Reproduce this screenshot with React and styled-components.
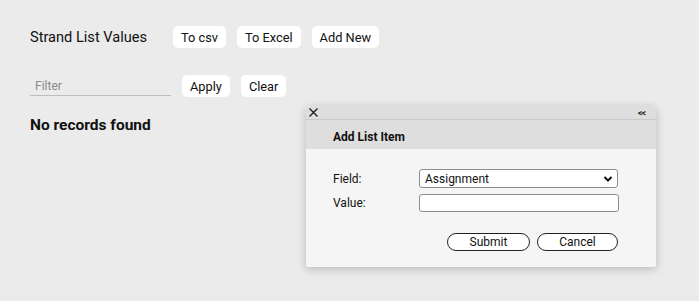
import React from "react";
import styled, { createGlobalStyle } from "styled-components";

const GlobalStyle = createGlobalStyle`
  body {
    margin: 0;
    background: #ebebeb;
    font-family: Roboto, "Liberation Sans", sans-serif;
    color: #111;
  }
`;

const Page = styled.div`
  position: relative;
  width: 699px;
  height: 301px;
  padding: 26px 30px 0 30px;
  box-sizing: border-box;
`;

const Toolbar = styled.div`
  display: flex;
  align-items: center;
  gap: 11px;
  height: 22px;
`;

const Title = styled.div`
  width: 132px;
  font-size: 14.6px;
`;

const Button = styled.button`
  height: 22px;
  padding: 0 8px;
  border: none;
  border-radius: 5px;
  background: #fff;
  font-family: inherit;
  font-size: 12.8px;
  color: #111;
`;

const FilterRow = styled.div`
  display: flex;
  align-items: center;
  gap: 11px;
  margin-top: 27px;
  height: 22px;
`;

const FilterInput = styled.input`
  width: 141px;
  height: 20px;
  box-sizing: border-box;
  border: none;
  border-bottom: 1px solid #bdbdbd;
  background: transparent;
  font-family: inherit;
  font-size: 12px;
  padding: 0 5px;
  outline: none;
  &::placeholder {
    color: #8a8a8a;
  }
`;

const Empty = styled.div`
  margin-top: 19px;
  font-size: 15.5px;
  font-weight: 700;
`;

const Dialog = styled.div`
  position: absolute;
  left: 306px;
  top: 106px;
  width: 350px;
  height: 161px;
  background: #f5f5f5;
  border-radius: 4px 4px 2px 2px;
  box-shadow: 0 2px 10px rgba(0, 0, 0, 0.22);
  overflow: hidden;
  display: flex;
  flex-direction: column;
`;

const TitleBar = styled.div`
  height: 13px;
  display: flex;
  align-items: center;
  justify-content: space-between;
  padding: 0 11px 0 2px;
  background: #dedede;
  border-bottom: 1px solid #cacaca;
`;

const Collapse = styled.span`
  font-size: 9px;
  font-weight: 700;
  letter-spacing: -1px;
  color: #222;
`;

const Header = styled.div`
  height: 29px;
  box-sizing: border-box;
  background: #dedede;
  padding: 10px 0 0 27px;
  font-size: 12px;
  font-weight: 700;
`;

const Body = styled.div`
  padding: 20px 38px 0 27px;
  display: flex;
  flex-direction: column;
`;

const FormRow = styled.div`
  display: flex;
  align-items: center;
  margin-bottom: 6px;
`;

const Label = styled.label`
  width: 86px;
  font-size: 12px;
`;

const Select = styled.div`
  flex: 1;
  height: 19px;
  box-sizing: border-box;
  border: 1px solid #8d8d8d;
  border-radius: 3px;
  background: #fff;
  display: flex;
  align-items: center;
  justify-content: space-between;
  padding: 0 4px 0 5px;
  font-size: 12px;
`;

const TextInput = styled.input`
  flex: 1;
  height: 18px;
  box-sizing: border-box;
  border: 1px solid #8d8d8d;
  border-radius: 3px;
  background: #fff;
  margin-right: -1px;
`;

const Actions = styled.div`
  display: flex;
  justify-content: flex-end;
  gap: 7px;
  margin-top: 15px;
`;

const PillButton = styled.button`
  width: ${(p) => p.$w}px;
  height: 18px;
  border: 1px solid #222;
  border-radius: 9px;
  background: #fff;
  font-family: inherit;
  font-size: 12px;
  color: #111;
  padding: 0;
`;

const Close = () => (
  <svg width="11" height="11" viewBox="0 0 11 11">
    <path d="M1.5 1.5 L9.5 9.5 M9.5 1.5 L1.5 9.5" stroke="#222" strokeWidth="1.4" />
  </svg>
);

const Chevron = () => (
  <svg width="10" height="8" viewBox="0 0 10 8">
    <path d="M1.5 2 L5 5.5 L8.5 2" stroke="#111" strokeWidth="2" fill="none" />
  </svg>
);

const App = () => (
  <>
    <GlobalStyle />
    <Page>
      <Toolbar>
        <Title>Strand List Values</Title>
        <Button>To csv</Button>
        <Button>To Excel</Button>
        <Button>Add New</Button>
      </Toolbar>
      <FilterRow>
        <FilterInput placeholder="Filter" />
        <Button>Apply</Button>
        <Button>Clear</Button>
      </FilterRow>
      <Empty>No records found</Empty>
      <Dialog>
        <TitleBar>
          <Close />
          <Collapse>&lt;&lt;</Collapse>
        </TitleBar>
        <Header>Add List Item</Header>
        <Body>
          <FormRow>
            <Label>Field:</Label>
            <Select>
              <span>Assignment</span>
              <Chevron />
            </Select>
          </FormRow>
          <FormRow>
            <Label>Value:</Label>
            <TextInput />
          </FormRow>
          <Actions>
            <PillButton $w={83}>Submit</PillButton>
            <PillButton $w={81}>Cancel</PillButton>
          </Actions>
        </Body>
      </Dialog>
    </Page>
  </>
);

export default App;
